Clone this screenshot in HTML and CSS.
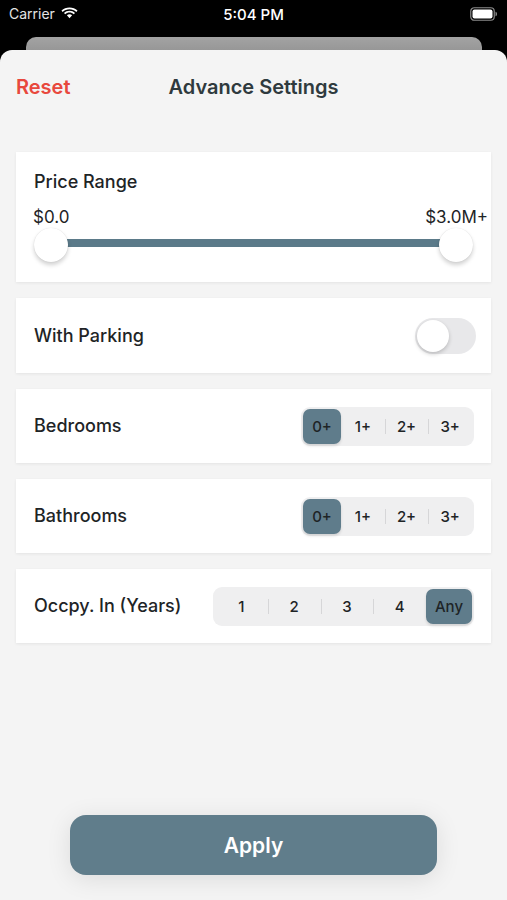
FILE: index.html
```html
<!DOCTYPE html>
<html lang="en">
<head>
    <meta charset="UTF-8">
    <meta name="viewport" content="width=device-width, initial-scale=1.0">
    <title>Advance Settings</title>
    <link rel="stylesheet" href="styles.css">
</head>
<body>
    <div class="status-bar">
        <div class="status-left">
            <span>Carrier</span>
            <svg class="wifi" width="17" height="12" viewBox="0 0 17 12">
                <path d="M8.5 2.2c2.6 0 5 1 6.8 2.7l1.2-1.3C14.4 1.6 11.6.4 8.5.4S2.6 1.6.5 3.6l1.2 1.3C3.5 3.2 5.9 2.2 8.5 2.2z" fill="#fff"/>
                <path d="M8.5 5.6c1.6 0 3.1.6 4.3 1.7l1.2-1.3C12.5 4.6 10.6 3.8 8.5 3.8S4.5 4.6 3 6l1.2 1.3c1.2-1.1 2.7-1.7 4.3-1.7z" fill="#fff"/>
                <path d="M8.5 7.3c-1 0-1.9.4-2.6 1l2.6 2.9 2.6-2.9c-.7-.6-1.6-1-2.6-1z" fill="#fff"/>
            </svg>
        </div>
        <div class="status-time">5:04 PM</div>
        <div class="status-right">
            <svg width="28" height="14" viewBox="0 0 28 14">
                <rect x="0.75" y="0.75" width="23.5" height="12.5" rx="3.5" fill="none" stroke="#8a8a8a" stroke-width="1.2"/>
                <rect x="2.5" y="2.5" width="20" height="9" rx="2" fill="#fff"/>
                <path d="M25.5 4.8c1 .3 1.5 1.1 1.5 2.2s-.5 1.9-1.5 2.2z" fill="#8a8a8a"/>
            </svg>
        </div>
    </div>

    <div class="sheet-behind"></div>

    <div class="sheet">
        <div class="sheet-header">
            <a class="reset-link">Reset</a>
            <h1 class="sheet-title">Advance Settings</h1>
        </div>

        <div class="card-list">
            <div class="card price-card">
                <div class="card-label">Price Range</div>
                <div class="range-labels">
                    <span>$0.0</span>
                    <span>$3.0M+</span>
                </div>
                <div class="range-slider">
                    <div class="range-track"></div>
                    <div class="range-thumb thumb-min"></div>
                    <div class="range-thumb thumb-max"></div>
                </div>
            </div>

            <div class="card row-card">
                <div class="card-label">With Parking</div>
                <div class="toggle">
                    <div class="toggle-knob"></div>
                </div>
            </div>

            <div class="card row-card">
                <div class="card-label">Bedrooms</div>
                <div class="segmented">
                    <div class="segment active">0+</div>
                    <div class="segment">1+</div>
                    <div class="segment divided">2+</div>
                    <div class="segment divided">3+</div>
                </div>
            </div>

            <div class="card row-card">
                <div class="card-label">Bathrooms</div>
                <div class="segmented">
                    <div class="segment active">0+</div>
                    <div class="segment">1+</div>
                    <div class="segment divided">2+</div>
                    <div class="segment divided">3+</div>
                </div>
            </div>

            <div class="card row-card">
                <div class="card-label">Occpy. In (Years)</div>
                <div class="segmented wide">
                    <div class="segment">1</div>
                    <div class="segment divided">2</div>
                    <div class="segment divided">3</div>
                    <div class="segment divided">4</div>
                    <div class="segment active">Any</div>
                </div>
            </div>
        </div>

        <div class="sheet-footer">
            <button class="apply-button">Apply</button>
        </div>
    </div>
</body>
</html>
```

FILE: styles.css
```css
* {
    box-sizing: border-box;
}
body {
    margin: 0;
    background: #000;
    font-family: Inter, "Noto Sans", sans-serif;
    color: #1e2426;
}
.status-bar {
    height: 37px;
    display: flex;
    align-items: center;
    justify-content: space-between;
    padding: 0 9px 10px 9px;
    color: #fff;
    font-size: 14px;
    position: relative;
}
.status-left {
    display: flex;
    align-items: center;
    gap: 6px;
    color: #e4e4e4;
}
.status-left .wifi {
    margin-top: -2px;
}
.status-time {
    position: absolute;
    left: 0;
    right: 0;
    top: 5px;
    text-align: center;
    font-weight: 500;
    font-size: 15px;
}
.status-right {
    display: flex;
    margin-top: 1px;
}
.sheet-behind {
    height: 13px;
    margin: 0 25px 0 26px;
    background: linear-gradient(#a3a3a3, #979797);
    border-radius: 10px 10px 0 0;
}
.sheet {
    background: #f4f4f4;
    border-radius: 12px 12px 0 0;
    min-height: 850px;
    display: flex;
    flex-direction: column;
}
.sheet-header {
    height: 74px;
    display: flex;
    align-items: center;
    justify-content: center;
    position: relative;
}
.reset-link {
    position: absolute;
    left: 16px;
    top: 25px;
    color: #e8483d;
    font-size: 20px;
    font-weight: 600;
}
.sheet-title {
    margin: 0;
    font-size: 20px;
    font-weight: 600;
    color: #2f3a3e;
}
.card-list {
    margin-top: 28px;
    padding: 0 16px;
    display: flex;
    flex-direction: column;
    gap: 16px;
}
.card {
    background: #fff;
    box-shadow: 0 1px 3px rgba(0, 0, 0, 0.07);
}
.card-label {
    font-size: 18px;
    font-weight: 500;
    line-height: 22px;
}
.price-card {
    height: 130px;
    padding: 19px 18px 0 18px;
}
.range-labels {
    display: flex;
    justify-content: space-between;
    margin: 13px -15px 0 -1px;
    font-size: 17px;
    line-height: 22px;
}
.range-slider {
    position: relative;
    height: 34px;
}
.range-track {
    position: absolute;
    left: 17px;
    right: 17px;
    top: 11px;
    height: 8px;
    background: #5b7a89;
}
.range-thumb {
    position: absolute;
    top: 0;
    width: 34px;
    height: 34px;
    border-radius: 50%;
    background: #fff;
    box-shadow: 0 3px 4px rgba(0, 0, 0, 0.18), 0 0 1px rgba(0, 0, 0, 0.15);
}
.thumb-min {
    left: 0;
}
.thumb-max {
    right: 0;
}
.row-card {
    height: 74px;
    display: flex;
    align-items: center;
    justify-content: space-between;
    padding: 0 17px 0 18px;
}
.row-card:nth-child(2) {
    height: 75px;
    padding-right: 15px;
}
.toggle {
    width: 61px;
    height: 36px;
    border-radius: 18px;
    background: #e8e8ea;
    padding: 2px;
}
.toggle-knob {
    width: 32px;
    height: 32px;
    border-radius: 50%;
    background: #fff;
    box-shadow: 0 2px 4px rgba(0, 0, 0, 0.2);
}
.segmented {
    display: flex;
    width: 173px;
    height: 39px;
    padding: 2px;
    border-radius: 9px;
    background: #efeff0;
}
.segmented.wide {
    width: 261px;
}
.segment {
    flex: 1;
    display: flex;
    align-items: center;
    justify-content: center;
    font-size: 15px;
    font-weight: 500;
    color: #1e2426;
    position: relative;
}
.segment.divided::before {
    content: "";
    position: absolute;
    left: 0;
    top: 10px;
    bottom: 10px;
    width: 1px;
    background: #d6d6d8;
}
.segment.active {
    flex: 0 0 38px;
    background: #5f7c8b;
    border-radius: 7px;
    box-shadow: 0 2px 3px rgba(0, 0, 0, 0.12);
}
.wide .segment.active {
    flex-basis: 46px;
}
.sheet-footer {
    margin-top: auto;
    padding: 0 70px 25px 70px;
}
.apply-button {
    width: 100%;
    height: 60px;
    border: none;
    border-radius: 16px;
    background: #607d8b;
    color: #fff;
    font-family: Inter, "Noto Sans", sans-serif;
    font-size: 21px;
    font-weight: 600;
    box-shadow: 0 4px 24px rgba(0, 0, 0, 0.1);
}
```
